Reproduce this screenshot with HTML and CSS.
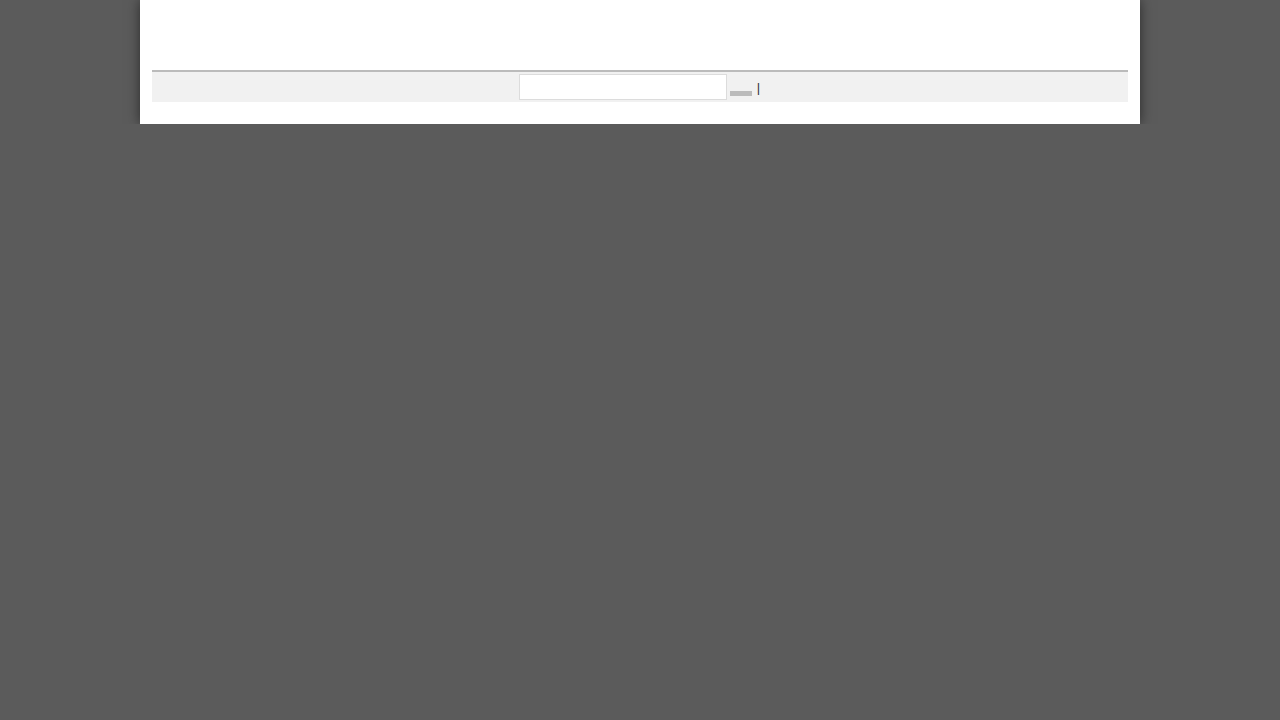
FILE: index.html
```html
<!DOCTYPE html>
<html lang="en">
<head>
    <meta charset="UTF-8">
    <meta name="viewport" content="width=device-width, initial-scale=1.0">
    <title>Search</title>
    <link rel="stylesheet" href="styles.css">
</head>
<body>
    <div class="page">
        <div class="header"></div>
        <form class="search-bar">
            <input type="text" class="search-input" name="q">
            <button type="button" class="search-button"></button>
            <span class="divider">|</span>
        </form>
    </div>
</body>
</html>
```

FILE: styles.css
```css
/* Global */
body {
    background-color: #5b5b5b;
    font-family: "Liberation Sans", Arial, sans-serif;
    margin: 0;
    padding: 0;
}
.page {
    width: 976px;
    margin: 0 auto;
    padding: 0 12px 22px;
    background-color: #fff;
    box-shadow: 0 0 12px rgba(0, 0, 0, 0.55);
}
.header {
    height: 70px;
}
/* Barra de busca */
.search-bar {
    display: flex;
    justify-content: center;
    align-items: flex-start;
    margin: 0;
    padding: 2px 0;
    border-top: 2px solid #bbb;
    background-color: #f1f1f1;
}
.search-input {
    box-sizing: border-box;
    width: 208px;
    height: 26px;
    margin: 0;
    padding: 2px 4px;
    border: 1px solid #dcdcdc;
    background-color: #fff;
    font-size: 13px;
}
.search-button {
    width: 22px;
    height: 5px;
    margin: 17px 0 0 3px;
    padding: 0;
    border: none;
    background-color: #bbb;
    cursor: pointer;
}
.divider {
    display: inline-block;
    width: 4.2px;
    margin: 6px 0 0 4.8px;
    font-size: 13px;
    line-height: 16px;
    color: #333;
}
```
